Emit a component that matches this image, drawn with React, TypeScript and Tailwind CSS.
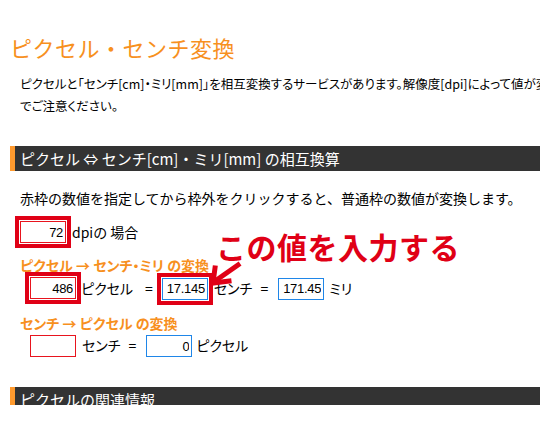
import React from 'react';

const jp = "font-['Noto_Sans_CJK_JP','Noto_Sans',sans-serif]";

function NumBox({ value, tone }: { value: string; tone: 'red' | 'blue' }) {
  return (
    <input
      type="text"
      readOnly
      value={value}
      className={`h-[22px] w-[46px] border bg-white px-[2px] text-right font-['Liberation_Sans','Arial',sans-serif] text-[13px] tracking-[-0.3px] leading-[20px] text-black outline-none ${
        tone === 'red' ? 'border-[#e8141e]' : 'border-[#1f86e8]'
      }`}
    />
  );
}

// thick red frame used by the annotation
function Marked({ children }: { children: React.ReactNode }) {
  return <span className="inline-flex outline-4 outline-offset-[1px] outline-solid outline-[#e00016]">{children}</span>;
}

function BarHeading({ children, className = '' }: { children: React.ReactNode; className?: string }) {
  return (
    <div className={`ml-[10px] h-[25px] border-l-[5px] border-[#ff9a2e] bg-[#333333] pl-[5px] text-[15px] leading-[25px] text-white ${className}`}>
      {children}
    </div>
  );
}

export default function App() {
  return (
    <div className={`relative h-[430px] w-[540px] overflow-hidden bg-white ${jp}`}>
      <div className="h-[405px] w-[600px] overflow-hidden">
        <h1 className="ml-[10px] pt-[36px] text-[22px] leading-[22px] tracking-[0.5px] text-[#f7901e]">
          ピクセル・センチ変換
        </h1>

        <p className="ml-[20px] mt-[15px] text-[12.5px] leading-[22px] text-black [font-feature-settings:'palt']">
          ピクセルと「センチ[cm]・ミリ[mm]」を相互変換するサービスがあります。解像度[dpi]によって値が変わるの
          <br />
          でご注意ください。
        </p>

        <BarHeading className="mt-[29px]">ピクセル ⇔ センチ[cm]・ミリ[mm] の相互換算</BarHeading>

        <div className="pl-[20px] text-[14px] text-black">
          <p className="mt-[17px] leading-[20px]">赤枠の数値を指定してから枠外をクリックすると、普通枠の数値が変換します。</p>

          <div className="mt-[13px] flex items-center gap-[4px]">
            <Marked>
              <NumBox value="72" tone="red" />
            </Marked>
            <span className="ml-[2px]">dpiの 場合</span>
          </div>

          <p className="mt-[13px] text-[14px] font-bold leading-[18px] text-[#f7901e] [font-feature-settings:'palt']">
            ピクセル → センチ・ミリ の変換
          </p>

          <div className="ml-[10px] mt-[3px] flex items-center [font-feature-settings:'palt']">
            <Marked>
              <NumBox value="486" tone="red" />
            </Marked>
            <span className="ml-[5px]">ピクセル</span>
            <span className="ml-[12px]">=</span>
            <span className="ml-[9px]">
              <Marked>
                <NumBox value="17.145" tone="blue" />
              </Marked>
            </span>
            <span className="ml-[6px]">センチ</span>
            <span className="ml-[8px]">=</span>
            <span className="ml-[10px]">
              <NumBox value="171.45" tone="blue" />
            </span>
            <span className="ml-[5px]">ミリ</span>
          </div>

          <p className="mt-[14px] text-[14px] font-bold leading-[18px] text-[#f7901e] [font-feature-settings:'palt']">
            センチ → ピクセル の変換
          </p>

          <div className="ml-[10px] mt-[3px] flex items-center [font-feature-settings:'palt']">
            <NumBox value="" tone="red" />
            <span className="ml-[6px]">センチ</span>
            <span className="ml-[8px]">=</span>
            <span className="ml-[10px]">
              <NumBox value="0" tone="blue" />
            </span>
            <span className="ml-[4px]">ピクセル</span>
          </div>
        </div>

        <BarHeading className="mt-[30px]">ピクセルの関連情報</BarHeading>
      </div>

      {/* annotation overlay */}
      <div className="absolute left-[216px] top-[229px] text-[30px] font-bold leading-[34px] tracking-[0.5px] text-[#e00016]">
        この値を入力する
      </div>
      <svg className="absolute left-[205px] top-[258px]" width="40" height="32" viewBox="0 0 40 32">
        <g fill="none" stroke="#e00016" strokeWidth="5" strokeLinecap="square" strokeLinejoin="miter">
          <path d="M33 7 L10 23" />
          <path d="M10 10 L8 25 L24 23" />
        </g>
      </svg>
    </div>
  );
}
